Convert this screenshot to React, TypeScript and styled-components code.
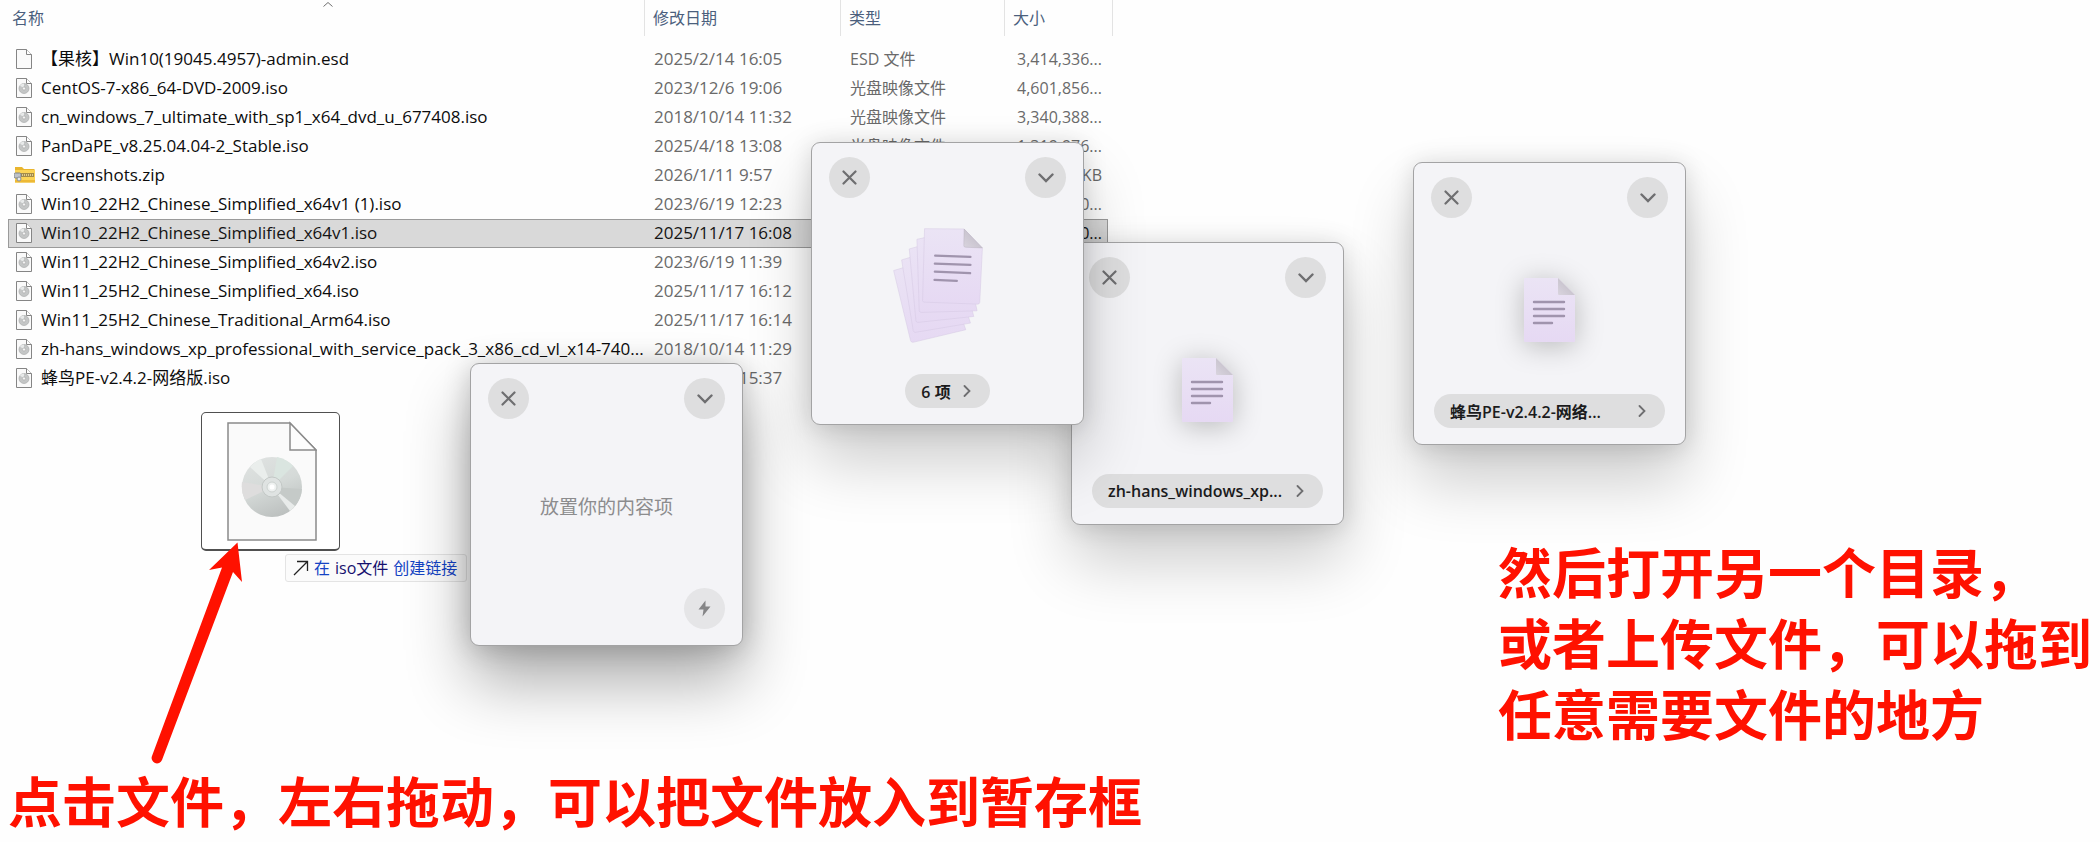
import React from "react";
import styled, { createGlobalStyle, css } from "styled-components";

const GlobalStyle = createGlobalStyle`
  * { box-sizing: border-box; }
  body {
    margin: 0;
    background: #fefefe;
    font-family: "Open Sans", "Noto Sans CJK SC", sans-serif;
    font-size: 17px;
    color: #111;
  }
  button { font: inherit; border: 0; padding: 0; cursor: pointer; }
`;

const Desktop = styled.main`
  position: relative;
  display: grid;
  grid-template-columns: 53% 1fr;
  grid-template-rows: 1fr auto;
  min-height: 100vh;
  overflow: hidden;
`;

/* ---------- file list ---------- */

const Explorer = styled.section`
  min-width: 0;
`;

const FileTable = styled.table`
  width: 100%;
  table-layout: fixed;
  border-collapse: separate;
  border-spacing: 0;
  white-space: nowrap;
`;

const Col = styled.col<{ $w?: number }>`
  width: ${(p) => (p.$w ? `${p.$w}px` : "auto")};
`;

const HeadCell = styled.th<{ $lead?: boolean }>`
  position: relative;
  height: 36px;
  padding: 0 0 0 ${(p) => (p.$lead ? 12 : 8)}px;
  border-right: 1px solid #e3e3e3;
  text-align: left;
  font-size: 16px;
  line-height: 36px;
  font-weight: 400;
  color: #4b5f7d;
`;

const SortMark = styled.svg`
  position: absolute;
  top: 1px;
  left: 50%;
`;

const Spacer = styled.tr`
  height: 9px;
`;

const Cell = styled.td<{ $kind: "edge" | "name" | "date" | "type" | "size" }>`
  height: 29px;
  line-height: 26px;
  padding: 0 0 2px;
  color: #6a6a6a;
  ${(p) => p.$kind === "name" && css`color: #0c0c0c; padding-left: 6px;`}
  ${(p) => p.$kind === "date" && css`padding-left: 9px;`}
  ${(p) => p.$kind === "type" && css`padding-left: 9px; font-size: 16px;`}
  ${(p) => p.$kind === "size" && css`padding-right: 6px; text-align: right; font-size: 16px;`}
`;

const Row = styled.tr<{ $selected?: boolean }>`
  ${(p) =>
    p.$selected &&
    css`
      ${Cell}:not(:first-child) {
        background: #d9d9d9;
        color: #141414;
        box-shadow: inset 0 1px #9a9a9a, inset 0 -1px #9a9a9a;
      }
      ${Cell}:nth-child(2) {
        box-shadow: inset 1px 1px #9a9a9a, inset 0 -1px #9a9a9a;
      }
      ${Cell}:last-child {
        box-shadow: inset 0 1px #9a9a9a, inset -1px -1px #9a9a9a;
      }
    `}
`;

const FileName = styled.span`
  display: flex;
  align-items: center;
  gap: 6px;
  svg { flex: none; }
`;

type IconKind = "blank" | "iso" | "zip";

const FileIcon = ({ kind }: { kind: IconKind }) => {
  if (kind === "zip") {
    return (
      <svg width="21" height="20" viewBox="0 0 21 20" aria-hidden="true">
        <path d="M1 2h7l2 2h10.500v13H1z" fill="#e9b52e" />
        <path d="M1 5h20v12.500H1z" fill="#fbd457" />
        <path d="M1 15h20v2.500H1z" fill="#edb935" />
        <rect x="6" y="8" width="14" height="4" fill="#a38b4a" />
        <path d="M6 10h14" stroke="#f3e4a8" strokeWidth="1.500" strokeDasharray="1 1" />
        <rect x="0" y="8" width="7" height="5" rx="1.500" fill="#bfc3c8" stroke="#7d8288" />
        <circle cx="5" cy="14" r="2" fill="#e6e9ec" stroke="#8a8f95" />
      </svg>
    );
  }
  return (
    <svg width="21" height="20" viewBox="0 0 21 20" aria-hidden="true">
      <path d="M2.500.500h10l5 5v14h-15z" fill="#fafafa" stroke="#858585" />
      <path d="M12.500.500v5h5" fill="#fff" stroke="#858585" />
      {kind === "iso" && (
        <>
          <circle cx="10" cy="10.500" r="5" fill="#c4c6c6" stroke="#a9abab" strokeWidth=".7" />
          <path d="M10 10.500 6 7.500A5 5 0 0 1 10 5.500z" fill="#e8eaea" />
          <circle cx="10" cy="10.500" r="1.600" fill="#f4f4f4" stroke="#a5a5a5" strokeWidth=".6" />
        </>
      )}
    </svg>
  );
};

interface FileEntry {
  name: string;
  date: string;
  type: string;
  size: string;
  icon: IconKind;
  selected?: boolean;
}

const ISO = "光盘映像文件";

const files: FileEntry[] = [
  { name: "【果核】Win10(19045.4957)-admin.esd", date: "2025/2/14 16:05", type: "ESD 文件", size: "3,414,336...", icon: "blank" },
  { name: "CentOS-7-x86_64-DVD-2009.iso", date: "2023/12/6 19:06", type: ISO, size: "4,601,856...", icon: "iso" },
  { name: "cn_windows_7_ultimate_with_sp1_x64_dvd_u_677408.iso", date: "2018/10/14 11:32", type: ISO, size: "3,340,388...", icon: "iso" },
  { name: "PanDaPE_v8.25.04.04-2_Stable.iso", date: "2025/4/18 13:08", type: ISO, size: "1,319,976...", icon: "iso" },
  { name: "Screenshots.zip", date: "2026/1/11 9:57", type: "ZIP 文件", size: "KB", icon: "zip" },
  { name: "Win10_22H2_Chinese_Simplified_x64v1 (1).iso", date: "2023/6/19 12:23", type: ISO, size: "0...", icon: "iso" },
  { name: "Win10_22H2_Chinese_Simplified_x64v1.iso", date: "2025/11/17 16:08", type: ISO, size: "0...", icon: "iso", selected: true },
  { name: "Win11_22H2_Chinese_Simplified_x64v2.iso", date: "2023/6/19 11:39", type: ISO, size: "", icon: "iso" },
  { name: "Win11_25H2_Chinese_Simplified_x64.iso", date: "2025/11/17 16:12", type: ISO, size: "", icon: "iso" },
  { name: "Win11_25H2_Chinese_Traditional_Arm64.iso", date: "2025/11/17 16:14", type: ISO, size: "", icon: "iso" },
  { name: "zh-hans_windows_xp_professional_with_service_pack_3_x86_cd_vl_x14-740...", date: "2018/10/14 11:29", type: ISO, size: "", icon: "iso" },
  { name: "蜂鸟PE-v2.4.2-网络版.iso", date: "2025/4/18 15:37", type: ISO, size: "", icon: "iso" },
];

/* ---------- floating shelves ---------- */

const Shelf = styled.article<{ $x: number; $y: number; $active?: boolean }>`
  position: absolute;
  left: ${(p) => p.$x}px;
  top: ${(p) => p.$y}px;
  display: flex;
  flex-direction: column;
  width: 273px;
  height: 283px;
  padding: 14px 17px 16px;
  border: 1px solid #a3a3a4;
  border-radius: 9px;
  background: #f4f4f7;
  box-shadow: ${(p) =>
    p.$active
      ? "0 36px 64px rgba(0,0,0,.32), 0 2px 28px rgba(0,0,0,.2)"
      : "0 36px 64px rgba(0,0,0,.2), 0 2px 24px rgba(0,0,0,.14)"};
`;

const ShelfBar = styled.header`
  display: flex;
  justify-content: space-between;
`;

const RoundButton = styled.button<{ $faint?: boolean }>`
  display: grid;
  place-items: center;
  width: 41px;
  height: 41px;
  border-radius: 50%;
  background: ${(p) => (p.$faint ? "#e5e5e7" : "#dededf")};
  color: #6e6e70;
`;

const ShelfBody = styled.div`
  flex: 1;
  display: flex;
  align-items: center;
  justify-content: center;
  padding-top: 8px;
  min-height: 0;
`;

const Placeholder = styled.p`
  margin: 0;
  padding-bottom: 4px;
  font-size: 19px;
  color: #8c8c8e;
`;

const ShelfFooter = styled.footer<{ $align: "center" | "flex-end" }>`
  display: flex;
  justify-content: ${(p) => p.$align};
  padding: 0 ${(p) => (p.$align === "center" ? 3 : 0)}px;
`;

const Pill = styled.button<{ $wide?: boolean }>`
  display: flex;
  align-items: center;
  justify-content: space-between;
  gap: 12px;
  flex: ${(p) => (p.$wide ? "1" : "none")};
  height: 34px;
  padding: 0 19px 1px 16px;
  border-radius: 17px;
  background: #dededf;
  color: #1b1b1c;
  font-size: 16px;
  font-weight: 600;
  white-space: nowrap;
`;

const CloseGlyph = () => (
  <svg width="15" height="15" viewBox="0 0 15 15" aria-hidden="true">
    <path d="M1.500 1.500l12 12M13.500 1.500l-12 12" stroke="currentColor" strokeWidth="2.200" strokeLinecap="round" />
  </svg>
);

const DownGlyph = () => (
  <svg width="16" height="10" viewBox="0 0 16 10" aria-hidden="true">
    <path d="M1.500 1.500L8 8l6.500-6.500" fill="none" stroke="currentColor" strokeWidth="2.400" strokeLinecap="round" />
  </svg>
);

const NextGlyph = () => (
  <svg width="8" height="12" viewBox="0 0 8 12" aria-hidden="true">
    <path d="M1.500 1l5 5-5 5" fill="none" stroke="#6e6e70" strokeWidth="1.800" strokeLinecap="round" />
  </svg>
);

const BoltGlyph = () => (
  <svg width="13" height="17" viewBox="0 0 13 17" aria-hidden="true">
    <path d="M7.500.500L.500 9.500h5L4.500 16.500 12.500 6.500H7.500z" fill="#858587" />
  </svg>
);

const DocShadow = styled.svg`
  filter: drop-shadow(0 4px 14px rgba(0, 0, 0, 0.24));
`;

const PaperGradients = ({ id }: { id: string }) => (
  <defs>
    <linearGradient id={`${id}-sheet`} x1="0" y1="0" x2="0" y2="1">
      <stop offset="0" stopColor="#ebe4f5" />
      <stop offset="1" stopColor="#e6d9f3" />
    </linearGradient>
    <linearGradient id={`${id}-fold`} x1="0" y1="1" x2="1" y2="0">
      <stop offset="0" stopColor="#d9d4de" />
      <stop offset="1" stopColor="#bcb7c2" />
    </linearGradient>
  </defs>
);

const DocIcon = ({ id }: { id: string }) => (
  <DocShadow width="51" height="64" viewBox="0 0 51 64" aria-hidden="true">
    <PaperGradients id={id} />
    <path d="M1 0H34L51 17V63a1 1 0 0 1-1 1H1a1 1 0 0 1-1-1V1a1 1 0 0 1 1-1z" fill={`url(#${id}-sheet)`} />
    <path d="M34 0l17 17H35a1 1 0 0 1-1-1z" fill={`url(#${id}-fold)`} />
    <path d="M10 24h30M10 31h30M10 38h30M10 45h18" stroke="#a094ad" strokeWidth="2.400" strokeLinecap="round" />
  </DocShadow>
);

const StackIcon = () => (
  <svg width="115" height="131" viewBox="270 285 344 394" aria-hidden="true">
    <PaperGradients id="stack" />
    <g fill="url(#stack-sheet)" stroke="#d5c8e2" strokeWidth="1.500" strokeLinejoin="round">
      <path d="M280 422L420 380 497 600 338 638Q333 638 331 633z" />
      <path d="M304 390L440 350 511 580 345 608Q340 608 339 603z" />
      <path d="M327 357L460 320 521 560 353 578Q348 578 347 573z" />
      <path d="M350 328L480 300 531 543 363 548Q358 548 357 543z" />
      <path d="M373 296L492 297 547 354 539 518Q538 523 533 523L371 517Q367 516 367 512z" />
    </g>
    <path d="M492 297L547 354 497 352Q491 352 491 347z" fill="url(#stack-fold)" stroke="#aaa4b0" strokeWidth="1" />
    <path d="M405 377L511 381M404 401L511 405M404 425L510 430M403 450L470 453" stroke="#a094ad" strokeWidth="7" strokeLinecap="round" />
  </svg>
);

interface ShelfWindowProps {
  x: number;
  y: number;
  active?: boolean;
  label?: string;
  wide?: boolean;
  children: React.ReactNode;
}

const ShelfWindow = ({ x, y, active, label, wide, children }: ShelfWindowProps) => (
  <Shelf $x={x} $y={y} $active={active}>
    <ShelfBar>
      <RoundButton aria-label="关闭"><CloseGlyph /></RoundButton>
      <RoundButton aria-label="展开"><DownGlyph /></RoundButton>
    </ShelfBar>
    <ShelfBody>{children}</ShelfBody>
    <ShelfFooter $align={label ? "center" : "flex-end"}>
      {label ? (
        <Pill $wide={wide}>{label}<NextGlyph /></Pill>
      ) : (
        <RoundButton $faint aria-label="快捷操作"><BoltGlyph /></RoundButton>
      )}
    </ShelfFooter>
  </Shelf>
);

/* ---------- dragged file ---------- */

const DragGhost = styled.figure`
  position: absolute;
  left: 201px;
  top: 412px;
  display: grid;
  place-items: center;
  width: 139px;
  height: 139px;
  margin: 0;
  border: 1px solid #505050;
  border-bottom-width: 2px;
  border-radius: 5px;
  background: #fff;
`;

const DropHint = styled.div`
  position: absolute;
  left: 285px;
  top: 554px;
  display: flex;
  align-items: center;
  gap: 5px;
  height: 28px;
  padding: 0 9px 0 7px;
  border: 1px solid #e4e4e4;
  border-radius: 3px;
  background: #fbfbfb;
  font-size: 16px;
  line-height: 26px;
  color: #1443c4;
  white-space: nowrap;
`;

const HintTarget = styled.span`
  color: #15106e;
`;

const IsoArtwork = () => (
  <svg width="93" height="120" viewBox="-3 -1 93 120" aria-hidden="true">
    <defs>
      <linearGradient id="disc" x1="0.200" y1="0" x2="0.600" y2="1">
        <stop offset="0" stopColor="#dfe2e1" />
        <stop offset=".5" stopColor="#d5dad8" />
        <stop offset="1" stopColor="#bcc0bf" />
      </linearGradient>
    </defs>
    <path d="M1 1h62l26 27v90H1z" fill="#fafafa" stroke="#8b8b8b" strokeWidth="1.500" />
    <path d="M63 1v27h26z" fill="#fdfdfd" stroke="#8b8b8b" strokeWidth="1.500" />
    <circle cx="45" cy="65" r="30" fill="url(#disc)" />
    <path d="M45 65L23 45A30 30 0 0 1 34 37z" fill="#eaeeec" />
    <path d="M45 65L50 35A30 30 0 0 1 66 44z" fill="#dae5e0" />
    <path d="M45 65L15 60A30 30 0 0 0 18 78z" fill="#dedddd" />
    <path d="M45 65L75 67A30 30 0 0 1 68 84z" fill="#c5cac8" />
    <path d="M45 65L68 84A30 30 0 0 1 63 89z" fill="#e8ebea" />
    <circle cx="45" cy="65" r="10" fill="#dfe3e2" stroke="#c3c8c6" />
    <circle cx="45" cy="65" r="5" fill="#eef1f0" stroke="#cdd2d0" />
    <circle cx="45" cy="65" r="2.500" fill="#fff" />
  </svg>
);

/* ---------- annotations ---------- */

const Caption = styled.p`
  margin: 0;
  font-family: "Noto Sans CJK SC", sans-serif;
  font-size: 54px;
  line-height: 71px;
  font-weight: 700;
  color: #ff1100;
  white-space: nowrap;
`;

const SideCaption = styled(Caption)`
  align-self: end;
  justify-self: end;
  padding: 0 8px 16px 0;
`;

const BottomCaption = styled(Caption)`
  grid-column: 1 / -1;
  padding: 0 0 7px 8px;
`;

const Pointer = styled.svg`
  position: absolute;
  left: 145px;
  top: 540px;
`;

export default function App() {
  return (
    <>
      <GlobalStyle />
      <Desktop>
        <Explorer>
          <FileTable>
            <colgroup>
              <Col $w={8} />
              <Col />
              <Col $w={196} />
              <Col $w={164} />
              <Col $w={103} />
              <Col $w={5} />
            </colgroup>
            <thead>
              <tr>
                <HeadCell $lead colSpan={2}>
                  名称
                  <SortMark width="12" height="7" viewBox="0 0 12 7" aria-hidden="true">
                    <path d="M1.500 5.500L6 1.500l4.500 4" fill="none" stroke="#6f6f6f" />
                  </SortMark>
                </HeadCell>
                <HeadCell>修改日期</HeadCell>
                <HeadCell>类型</HeadCell>
                <HeadCell colSpan={2}>大小</HeadCell>
              </tr>
            </thead>
            <tbody>
              <Spacer aria-hidden="true" />
              {files.map((f) => (
                <Row key={f.name} $selected={f.selected}>
                  <Cell $kind="edge" />
                  <Cell $kind="name">
                    <FileName><FileIcon kind={f.icon} />{f.name}</FileName>
                  </Cell>
                  <Cell $kind="date">{f.date}</Cell>
                  <Cell $kind="type">{f.type}</Cell>
                  <Cell $kind="size">{f.size}</Cell>
                </Row>
              ))}
            </tbody>
          </FileTable>
        </Explorer>

        <SideCaption>
          然后打开另一个目录，<br />
          或者上传文件，可以拖到<br />
          任意需要文件的地方
        </SideCaption>

        <BottomCaption>点击文件，左右拖动，可以把文件放入到暂存框</BottomCaption>

        <DragGhost><IsoArtwork /></DragGhost>
        <DropHint>
          <svg width="16" height="16" viewBox="0 0 16 16" aria-hidden="true">
            <path d="M1 15L14.500 1.500M4 1.500h10.500V11" fill="none" stroke="#222" strokeWidth="1.300" />
          </svg>
          <span>在</span>
          <HintTarget>iso文件</HintTarget>
          <span>创建链接</span>
        </DropHint>

        <ShelfWindow x={1071} y={242} label="zh-hans_windows_xp..." wide>
          <DocIcon id="xp" />
        </ShelfWindow>
        <ShelfWindow x={811} y={142} label="6 项">
          <StackIcon />
        </ShelfWindow>
        <ShelfWindow x={1413} y={162} label="蜂鸟PE-v2.4.2-网络..." wide>
          <DocIcon id="pe" />
        </ShelfWindow>
        <ShelfWindow x={470} y={363} active>
          <Placeholder>放置你的内容项</Placeholder>
        </ShelfWindow>

        <Pointer width="100" height="226" viewBox="0 0 100 226" aria-hidden="true">
          <path
            d="M92.500 2.500L64 30L77 27.500L7 216A5 5 0 0 0 17 220L88 32L97 42z"
            fill="#ff1100"
          />
        </Pointer>
      </Desktop>
    </>
  );
}
